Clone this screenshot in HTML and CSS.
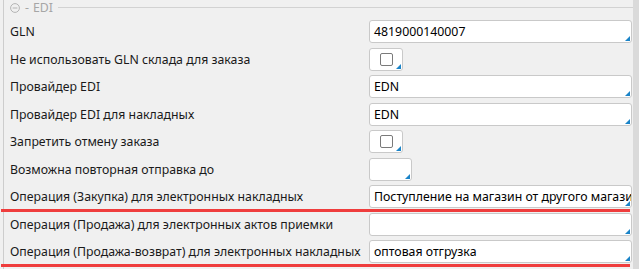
FILE: index.html
```
<!DOCTYPE html>
<html lang="ru">
<head>
    <meta charset="UTF-8">
    <title>EDI</title>
    <link rel="stylesheet" href="styles.css">
</head>
<body>
    <div class="panel">
        <div class="group">
            <div class="group-head">
                <svg class="collapse" width="10" height="10" viewBox="0 0 10 10">
                    <circle cx="5" cy="5" r="4.4" fill="none" stroke="#b4b4b4" stroke-width="1"/>
                    <line x1="2.6" y1="5" x2="7.4" y2="5" stroke="#b4b4b4" stroke-width="1"/>
                </svg>
                <span class="dash">-</span>
                <span class="title">EDI</span>
                <span class="rule"></span>
            </div>

            <div class="rows">
                <div class="row">
                    <label>GLN</label>
                    <div class="field wide">4819000140007</div>
                </div>
                <div class="row">
                    <label>Не использовать GLN склада для заказа</label>
                    <div class="field check"><span class="box"></span></div>
                </div>
                <div class="row">
                    <label>Провайдер EDI</label>
                    <div class="field wide">EDN</div>
                </div>
                <div class="row">
                    <label>Провайдер EDI для накладных</label>
                    <div class="field wide">EDN</div>
                </div>
                <div class="row">
                    <label>Запретить отмену заказа</label>
                    <div class="field check"><span class="box"></span></div>
                </div>
                <div class="row">
                    <label>Возможна повторная отправка до</label>
                    <div class="field short"></div>
                </div>
                <div class="row marked">
                    <label>Операция (Закупка) для электронных накладных</label>
                    <div class="field wide">Поступление на магазин от другого магазина</div>
                </div>
                <div class="row">
                    <label>Операция (Продажа) для электронных актов приемки</label>
                    <div class="field wide"></div>
                </div>
                <div class="row marked">
                    <label>Операция (Продажа-возврат) для электронных накладных</label>
                    <div class="field wide">оптовая отгрузка</div>
                </div>
            </div>
        </div>
        <div class="scroll"></div>
    </div>
</body>
</html>
```

FILE: styles.css
```
body {
    margin: 0;
    background-color: #f0f0f0;
    font-family: 'Noto Sans', sans-serif;
    font-size: 12.3px;
    color: #1a1a1a;
    height: 269px;
    overflow: hidden;
}
.panel {
    display: flex;
    height: 269px;
}
.group {
    flex: 1;
    margin-left: 3px;
    border-left: 1px solid #cdcdcd;
}
.group-head {
    display: flex;
    align-items: center;
    height: 16px;
    line-height: 16px;
    color: #a6a6a6;
}
.collapse {
    margin-left: 6px;
    margin-top: -1px;
}
.dash {
    margin-left: 5px;
}
.title {
    margin-left: 4px;
}
.rule {
    flex: 1;
    align-self: flex-start;
    height: 1px;
    margin-top: 7px;
    margin-left: 5px;
    background-color: #d2d2d2;
}
.rows {
    display: grid;
    grid-template-columns: 365px 1fr;
    row-gap: 4.5px;
    padding-top: 4px;
    padding-right: 1px;
}
.row {
    display: contents;
}
.row label {
    display: flex;
    align-items: center;
    padding-left: 6px;
    white-space: nowrap;
    overflow: hidden;
}
.field {
    position: relative;
    height: 21px;
    line-height: 21px;
    padding: 0 4px;
    background: #fff;
    border: 1px solid #c9c9c9;
    border-radius: 3px;
    color: #000;
    white-space: nowrap;
    overflow: hidden;
}
.field::after {
    content: "";
    position: absolute;
    right: 1px;
    bottom: 1px;
    border-left: 5px solid transparent;
    border-bottom: 5px solid #1b84c8;
}
.check {
    width: 24px;
    display: flex;
    align-items: center;
    justify-content: center;
}
.short {
    width: 33px;
}
.box {
    width: 11px;
    height: 11px;
    border: 1px solid #7a7a7a;
    border-radius: 2px;
}
.marked label {
    position: relative;
    overflow: visible;
}
.marked label::after {
    content: "";
    position: absolute;
    left: -3px;
    bottom: -4px;
    width: 629px;
    height: 3px;
    background-color: #ef3d3d;
    z-index: 2;
}
.scroll {
    width: 6px;
    background-color: #dadada;
}
```
